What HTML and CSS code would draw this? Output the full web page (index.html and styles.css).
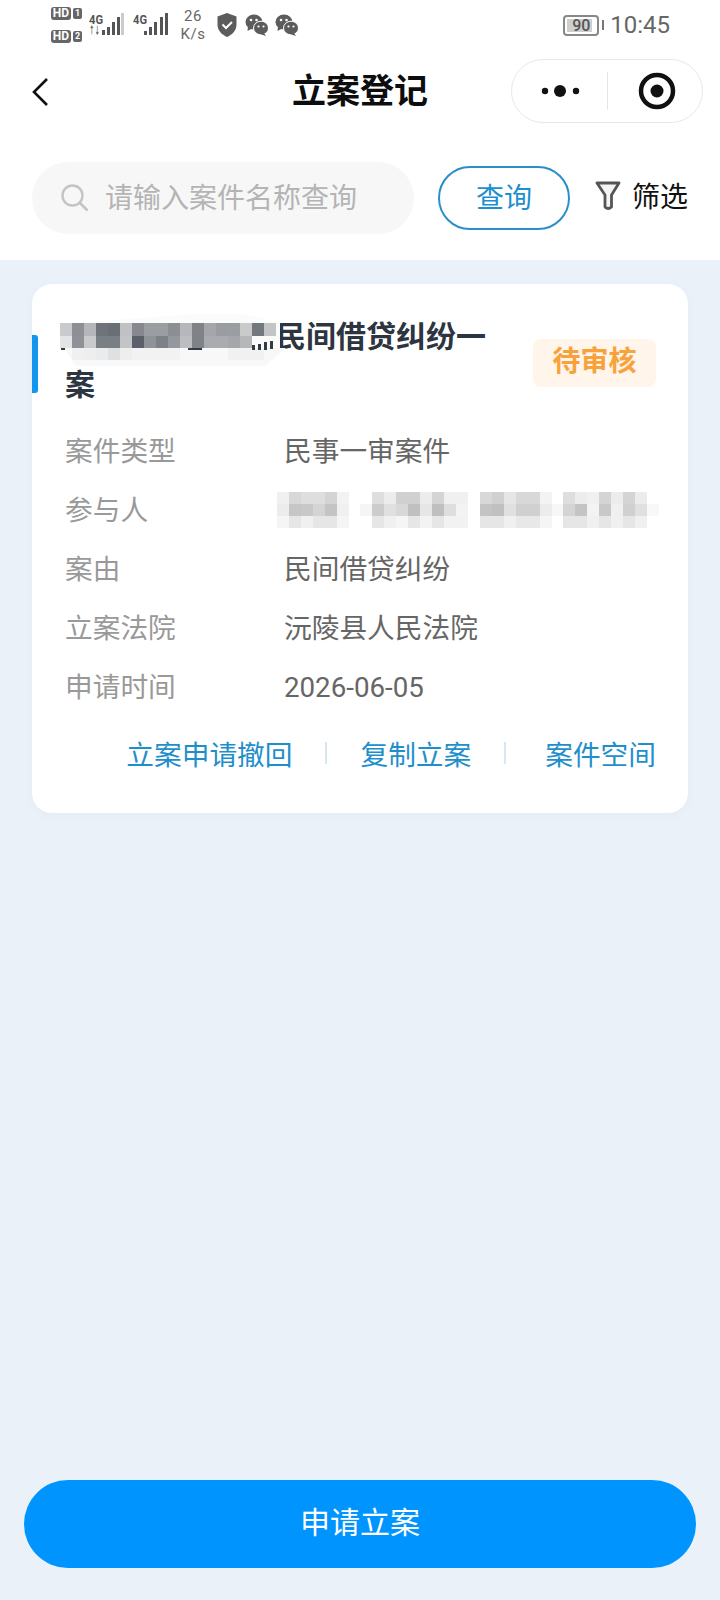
FILE: index.html
```html
<!DOCTYPE html>
<html lang="zh-CN">

<head>
    <meta charset="UTF-8">
    <meta name="viewport" content="width=device-width, initial-scale=1.0">
    <title>立案登记</title>
    <link rel="stylesheet" href="styles.css">
</head>

<body>
    <header class="top">
        <!-- phone status bar -->
        <div class="status">
            <div class="hd-col">
                <div class="hd-line"><span class="hd">HD</span><span class="sim">1</span></div>
                <div class="hd-line"><span class="hd">HD</span><span class="sim">2</span></div>
            </div>
            <svg class="signal" width="81" height="50" viewBox="0 0 81 50">
                <text x="0" y="24" class="net" textLength="14" lengthAdjust="spacingAndGlyphs">4G</text>
                <text x="0" y="34" class="arrows" textLength="11" lengthAdjust="spacingAndGlyphs">↑↓</text>
                <g fill="#555">
                    <rect x="13" y="30" width="3" height="5" />
                    <rect x="18" y="27" width="3" height="8" />
                    <rect x="23" y="22" width="3" height="13" />
                    <rect x="28" y="17" width="3" height="18" />
                </g>
                <rect x="32" y="13" width="3" height="22" fill="#ccc" />
                <text x="44" y="24" class="net" textLength="14" lengthAdjust="spacingAndGlyphs">4G</text>
                <g fill="#555">
                    <rect x="55" y="31" width="3" height="4" />
                    <rect x="60" y="27" width="3" height="8" />
                    <rect x="65" y="22" width="3" height="13" />
                    <rect x="71" y="17" width="3" height="18" />
                    <rect x="76" y="13" width="3" height="22" />
                </g>
            </svg>
            <div class="speed"><span>26</span><span>K/s</span></div>
            <svg class="shield" width="22" height="26" viewBox="0 0 22 26">
                <path d="M11 1 L20.5 4.5 V12.5 C20.5 19 15.5 23 11 25 C6.5 23 1.5 19 1.5 12.5 V4.5 Z" fill="#5c5c5c" />
                <path d="M6.5 12.5 L10 16 L16 10" fill="none" stroke="#fff" stroke-width="2" />
            </svg>
            <svg class="wechat" width="24" height="22" viewBox="0 0 24 22">
                <ellipse cx="9" cy="8" rx="8.5" ry="7.5" fill="#5c5c5c" />
                <path d="M3 12 L2.5 17 L8 14 Z" fill="#5c5c5c" />
                <circle cx="6" cy="6" r="1.3" fill="#fff" />
                <circle cx="11.5" cy="6" r="1.3" fill="#fff" />
                <ellipse cx="16" cy="14" rx="7.5" ry="6.8" fill="#5c5c5c" stroke="#fff" stroke-width="1" />
                <path d="M19 19 L21 22 L15 20 Z" fill="#5c5c5c" />
                <circle cx="13.5" cy="12.5" r="1.1" fill="#fff" />
                <circle cx="18.5" cy="12.5" r="1.1" fill="#fff" />
            </svg>
            <svg class="wechat" width="24" height="22" viewBox="0 0 24 22">
                <ellipse cx="9" cy="8" rx="8.5" ry="7.5" fill="#5c5c5c" />
                <path d="M3 12 L2.5 17 L8 14 Z" fill="#5c5c5c" />
                <circle cx="6" cy="6" r="1.3" fill="#fff" />
                <circle cx="11.5" cy="6" r="1.3" fill="#fff" />
                <ellipse cx="16" cy="14" rx="7.5" ry="6.8" fill="#5c5c5c" stroke="#fff" stroke-width="1" />
                <path d="M19 19 L21 22 L15 20 Z" fill="#5c5c5c" />
                <circle cx="13.5" cy="12.5" r="1.1" fill="#fff" />
                <circle cx="18.5" cy="12.5" r="1.1" fill="#fff" />
            </svg>
            <div class="status-right">
                <div class="battery"><span class="battery-level"></span><span class="battery-num">90</span></div>
                <span class="battery-nub"></span>
                <span class="clock">10:45</span>
            </div>
        </div>

        <nav class="nav">
            <div class="nav-left">
                <svg width="20" height="32" viewBox="0 0 20 32">
                    <path d="M17 3 L4 16 L17 29" fill="none" stroke="#111" stroke-width="2.6" />
                </svg>
            </div>
            <h1 class="nav-title">立案登记</h1>
            <div class="nav-right">
                <div class="capsule">
                    <svg class="capsule-more" width="95" height="64" viewBox="0 0 95 64">
                        <circle cx="33" cy="32" r="3.2" fill="#111" />
                        <circle cx="48" cy="32" r="6" fill="#111" />
                        <circle cx="64" cy="32" r="3.2" fill="#111" />
                    </svg>
                    <span class="capsule-line"></span>
                    <svg class="capsule-close" width="94" height="64" viewBox="0 0 94 64">
                        <circle cx="49" cy="32" r="16" fill="none" stroke="#111" stroke-width="4.5" />
                        <circle cx="49" cy="32" r="6.5" fill="#111" />
                    </svg>
                </div>
            </div>
        </nav>

        <div class="search-row">
            <div class="search-box">
                <svg width="30" height="30" viewBox="0 0 30 30">
                    <circle cx="12.5" cy="12.5" r="10" fill="none" stroke="#c4c4c4" stroke-width="2.4" />
                    <path d="M20 20 L27.5 27.5" stroke="#c4c4c4" stroke-width="2.6" />
                </svg>
                <span class="placeholder">请输入案件名称查询</span>
            </div>
            <button class="search-btn">查询</button>
            <div class="filter">
                <svg width="26" height="30" viewBox="0 0 26 30">
                    <path d="M2 2 H24 L16.5 14 V26 Q13 29 10 26 V14 Z" fill="#f4f4f4" stroke="#555" stroke-width="2.8" stroke-linejoin="round" />
                </svg>
                <span class="filter-text">筛选</span>
            </div>
        </div>
    </header>

    <main class="content">
        <section class="card">
            <span class="card-mark"></span>
            <div class="card-head">
                <div class="card-title"><span class="title-gap"></span>民间借贷纠纷一案</div>
                <span class="tag">待审核</span>
            </div>
            <div class="info-row"><span class="info-label">案件类型</span><span class="info-value">民事一审案件</span></div>
            <div class="info-row"><span class="info-label">参与人</span><span class="info-value"></span></div>
            <div class="info-row"><span class="info-label">案由</span><span class="info-value">民间借贷纠纷</span></div>
            <div class="info-row"><span class="info-label">立案法院</span><span class="info-value">沅陵县人民法院</span></div>
            <div class="info-row"><span class="info-label">申请时间</span><span class="info-value">2026-06-05</span></div>
            <div class="actions">
                <a class="action">立案申请撤回</a>
                <span class="action-line"></span>
                <a class="action">复制立案</a>
                <span class="action-line"></span>
                <a class="action action-last">案件空间</a>
            </div>

            <!-- pixelated cover over the case name -->
            <svg class="cover-title" width="236" height="70" viewBox="0 0 236 70">
                <path d="M135 0 H182 L220 9 V34 H12 V9 Z" fill="#fbfbfb" />
                <path d="M4 34 H226 L205 52 H16 Z" fill="#f8f8f8" />
                <g transform="translate(0 9)">
                    <rect x="0" width="12" height="13" fill="#c9cacd" />
                    <rect x="12" width="12" height="13" fill="#8c8f94" />
                    <rect x="24" width="12" height="13" fill="#b4b6ba" />
                    <rect x="36" width="12" height="13" fill="#6f747a" />
                    <rect x="48" width="12" height="13" fill="#6a6f76" />
                    <rect x="60" width="12" height="13" fill="#bfc1c4" />
                    <rect x="72" width="12" height="13" fill="#85888e" />
                    <rect x="84" width="12" height="13" fill="#9a9da2" />
                    <rect x="96" width="12" height="13" fill="#9a9da2" />
                    <rect x="108" width="12" height="13" fill="#8b8e93" />
                    <rect x="120" width="12" height="13" fill="#b5b7ba" />
                    <rect x="132" width="12" height="13" fill="#7f8388" />
                    <rect x="144" width="12" height="13" fill="#a4a6aa" />
                    <rect x="156" width="12" height="13" fill="#999ca0" />
                    <rect x="168" width="12" height="13" fill="#9a9da2" />
                    <rect x="180" width="12" height="13" fill="#c8cacc" />
                    <rect x="192" width="12" height="13" fill="#73777e" />
                    <rect x="204" width="12" height="13" fill="#c2c4c6" />
                </g>
                <g transform="translate(0 22)">
                    <rect x="0" width="12" height="12" fill="#e3e4e5" />
                    <rect x="12" width="12" height="12" fill="#8e9196" />
                    <rect x="24" width="12" height="12" fill="#c8cacc" />
                    <rect x="36" width="12" height="12" fill="#7a7f85" />
                    <rect x="48" width="12" height="12" fill="#7a7f85" />
                    <rect x="60" width="12" height="12" fill="#c2c4c6" />
                    <rect x="72" width="12" height="12" fill="#5b5f69" />
                    <rect x="84" width="12" height="12" fill="#8f9296" />
                    <rect x="96" width="12" height="12" fill="#7d8086" />
                    <rect x="108" width="12" height="12" fill="#94979b" />
                    <rect x="120" width="12" height="12" fill="#bbbdc0" />
                    <rect x="132" width="12" height="12" fill="#7f8388" />
                    <rect x="144" width="12" height="12" fill="#a9abaf" />
                    <rect x="156" width="12" height="12" fill="#a9abaf" />
                    <rect x="168" width="12" height="12" fill="#a4a6aa" />
                    <rect x="180" width="12" height="12" fill="#b5b7ba" />
                </g>
                <g transform="translate(0 34)">
                    <rect x="12" width="12" height="12" fill="#f0f0f1" />
                    <rect x="24" width="12" height="12" fill="#eeeeef" />
                    <rect x="36" width="12" height="12" fill="#eaebec" />
                    <rect x="48" width="12" height="12" fill="#dfe0e1" />
                    <rect x="60" width="12" height="12" fill="#eeeeef" />
                    <rect x="72" width="48" height="12" fill="#f2f2f3" />
                    <rect x="168" width="36" height="12" fill="#f1f1f2" />
                </g>
                <!-- bits of the name that stick out below the cover -->
                <g fill="#333b45">
                    <rect x="192" y="31" width="3" height="5" />
                    <rect x="198" y="30" width="3" height="6" />
                    <rect x="204" y="28" width="3" height="8" />
                    <rect x="210" y="27" width="3" height="8" />
                    <rect x="128" y="34" width="14" height="2" />
                    <rect x="1" y="34" width="4" height="2" />
                </g>
            </svg>

            <!-- pixelated cover over the participants -->
            <svg class="cover-people" width="400" height="44" viewBox="0 0 400 44">
                <g transform="translate(0 6)">
                    <rect x="7" width="12" height="12" fill="#f0f0f0" />
                    <rect x="19" width="12" height="12" fill="#d8d8d8" />
                    <rect x="31" width="24" height="12" fill="#dedede" />
                    <rect x="55" width="12" height="12" fill="#d4d4d4" />
                    <rect x="67" width="12" height="12" fill="#f3f3f3" />
                    <rect x="102" width="12" height="12" fill="#dedede" />
                    <rect x="114" width="12" height="12" fill="#ececec" />
                    <rect x="126" width="24" height="12" fill="#d0d0d0" />
                    <rect x="150" width="12" height="12" fill="#ececec" />
                    <rect x="162" width="12" height="12" fill="#d4d4d4" />
                    <rect x="174" width="24" height="12" fill="#f0f0f0" />
                    <rect x="210" width="12" height="12" fill="#d8d8d8" />
                    <rect x="222" width="12" height="12" fill="#d0d0d0" />
                    <rect x="234" width="12" height="12" fill="#e6e6e6" />
                    <rect x="246" width="24" height="12" fill="#d8d8d8" />
                    <rect x="270" width="12" height="12" fill="#f3f3f3" />
                    <rect x="293" width="12" height="12" fill="#dedede" />
                    <rect x="305" width="12" height="12" fill="#ececec" />
                    <rect x="317" width="12" height="12" fill="#f0f0f0" />
                    <rect x="329" width="12" height="12" fill="#d4d4d4" />
                    <rect x="341" width="12" height="12" fill="#ececec" />
                    <rect x="353" width="12" height="12" fill="#d4d4d4" />
                    <rect x="365" width="12" height="12" fill="#ececec" />
                </g>
                <g transform="translate(0 18)">
                    <rect x="7" width="12" height="12" fill="#ececec" />
                    <rect x="19" width="12" height="12" fill="#c6c6c6" />
                    <rect x="31" width="12" height="12" fill="#c8c8c8" />
                    <rect x="43" width="12" height="12" fill="#d4d4d4" />
                    <rect x="55" width="12" height="12" fill="#c4c4c4" />
                    <rect x="67" width="12" height="12" fill="#f0f0f0" />
                    <rect x="90" width="12" height="12" fill="#f5f5f5" />
                    <rect x="102" width="12" height="12" fill="#cccccc" />
                    <rect x="114" width="12" height="12" fill="#e0e0e0" />
                    <rect x="126" width="12" height="12" fill="#d8d8d8" />
                    <rect x="138" width="12" height="12" fill="#c0c0c0" />
                    <rect x="150" width="12" height="12" fill="#e6e6e6" />
                    <rect x="162" width="12" height="12" fill="#bfbfbf" />
                    <rect x="174" width="12" height="12" fill="#dedede" />
                    <rect x="186" width="12" height="12" fill="#f3f3f3" />
                    <rect x="210" width="12" height="12" fill="#c4c4c4" />
                    <rect x="222" width="12" height="12" fill="#c0c0c0" />
                    <rect x="234" width="12" height="12" fill="#e0e0e0" />
                    <rect x="246" width="24" height="12" fill="#d0d0d0" />
                    <rect x="270" width="12" height="12" fill="#ececec" />
                    <rect x="282" width="12" height="12" fill="#f7f7f7" />
                    <rect x="293" width="12" height="12" fill="#d4d4d4" />
                    <rect x="305" width="12" height="12" fill="#c4c4c4" />
                    <rect x="317" width="12" height="12" fill="#f3f3f3" />
                    <rect x="329" width="12" height="12" fill="#c8c8c8" />
                    <rect x="341" width="12" height="12" fill="#f0f0f0" />
                    <rect x="353" width="12" height="12" fill="#d0d0d0" />
                    <rect x="365" width="12" height="12" fill="#e0e0e0" />
                    <rect x="377" width="12" height="12" fill="#f8f8f8" />
                </g>
                <g transform="translate(0 30)">
                    <rect x="7" width="12" height="12" fill="#f5f5f5" />
                    <rect x="19" width="12" height="12" fill="#e6e6e6" />
                    <rect x="31" width="12" height="12" fill="#f0f0f0" />
                    <rect x="43" width="24" height="12" fill="#e6e6e6" />
                    <rect x="67" width="12" height="12" fill="#f5f5f5" />
                    <rect x="102" width="12" height="12" fill="#e6e6e6" />
                    <rect x="114" width="12" height="12" fill="#f0f0f0" />
                    <rect x="126" width="12" height="12" fill="#f5f5f5" />
                    <rect x="138" width="12" height="12" fill="#e6e6e6" />
                    <rect x="150" width="12" height="12" fill="#f3f3f3" />
                    <rect x="162" width="12" height="12" fill="#e6e6e6" />
                    <rect x="174" width="24" height="12" fill="#f2f2f2" />
                    <rect x="210" width="24" height="12" fill="#e6e6e6" />
                    <rect x="234" width="12" height="12" fill="#f0f0f0" />
                    <rect x="246" width="24" height="12" fill="#e8e8e8" />
                    <rect x="270" width="12" height="12" fill="#f5f5f5" />
                    <rect x="293" width="24" height="12" fill="#e6e6e6" />
                    <rect x="317" width="12" height="12" fill="#f0f0f0" />
                    <rect x="329" width="12" height="12" fill="#e6e6e6" />
                    <rect x="341" width="12" height="12" fill="#f0f0f0" />
                    <rect x="353" width="12" height="12" fill="#e6e6e6" />
                    <rect x="365" width="12" height="12" fill="#f0f0f0" />
                </g>
            </svg>
        </section>

        <button class="apply-btn">申请立案</button>
    </main>
</body>

</html>
```
FILE: styles.css
```css
* {
    box-sizing: border-box;
}

body {
    font-family: Roboto, 'Noto Sans CJK SC', sans-serif;
    margin: 0;
    padding: 0;
    width: 720px;
    height: 1600px;
    display: flex;
    flex-direction: column;
    background-color: #ebf1f8;
}

.top {
    background-color: #fff;
    height: 260px;
}

/* status bar */
.status {
    height: 50px;
    display: flex;
    align-items: center;
    padding: 0 50px 0 51px;
    color: #666;
}

.hd-col {
    width: 31px;
    height: 36px;
    margin: 0 7px 0 0;
    display: flex;
    flex-direction: column;
    justify-content: space-between;
}

.hd-line {
    display: flex;
    justify-content: space-between;
}

.hd {
    width: 20px;
    height: 13px;
    border-radius: 3px;
    background-color: #666;
    color: #fff;
    font-size: 12px;
    font-weight: 700;
    line-height: 13px;
    text-align: center;
}

.sim {
    width: 9px;
    height: 11px;
    margin-top: 1px;
    border-radius: 2px;
    background-color: #666;
    color: #fff;
    font-size: 9px;
    font-weight: 700;
    line-height: 11px;
    text-align: center;
}

.signal {
    flex: none;
}

.net {
    font-size: 12px;
    font-weight: 700;
    fill: #555;
}

.arrows {
    font-size: 10px;
    font-weight: 700;
    fill: #555;
}

.speed {
    width: 24px;
    margin: 0 11px;
    display: flex;
    flex-direction: column;
    align-items: center;
    font-size: 15px;
    line-height: 18px;
    letter-spacing: 0.5px;
}

.shield {
    margin-right: 7px;
}

.wechat {
    margin-right: 6px;
}

.status-right {
    margin-left: auto;
    display: flex;
    align-items: center;
    font-size: 24px;
}

.battery {
    position: relative;
    width: 36px;
    height: 21px;
    border: 2px solid #888;
    border-radius: 4px;
    padding: 2px;
}

.battery-level {
    display: block;
    width: 90%;
    height: 100%;
    background-color: #cfcfcf;
}

.battery-num {
    position: absolute;
    inset: 0;
    color: #555;
    font-size: 16px;
    font-weight: 500;
    line-height: 17px;
    text-align: center;
}

.battery-nub {
    width: 2px;
    height: 10px;
    margin: 0 6px 0 3px;
    background-color: #777;
}

/* title bar */
.nav {
    height: 82px;
    display: grid;
    grid-template-columns: 1fr auto 1fr;
    align-items: center;
}

.nav-left {
    padding: 2px 0 0 30px;
    display: flex;
}

.nav-title {
    margin: 0;
    padding-bottom: 6px;
    font-size: 34px;
    font-weight: 700;
    color: #0d0d0d;
}

.nav-right {
    display: flex;
    justify-content: flex-end;
    padding-right: 17px;
}

.capsule {
    width: 192px;
    height: 64px;
    border: 1px solid #e8e8e8;
    border-radius: 32px;
    display: flex;
    align-items: center;
    flex: none;
}

.capsule-line {
    flex: none;
    width: 1px;
    height: 38px;
    background-color: #e6e6e6;
}

.capsule svg {
    flex: none;
}

/* search */
.search-row {
    padding: 30px 32px 26px;
    display: flex;
    align-items: center;
}

.search-box {
    width: 382px;
    height: 72px;
    border-radius: 36px;
    background-color: #f7f7f7;
    display: flex;
    align-items: center;
    padding-left: 28px;
}

.placeholder {
    margin-left: 15px;
    padding-bottom: 5px;
    font-size: 28px;
    color: #b4b4b4;
}

.search-btn {
    width: 132px;
    height: 64px;
    margin-left: 24px;
    border: 2px solid #2a8fc7;
    border-radius: 32px;
    background-color: #fff;
    color: #1c90cc;
    font-family: inherit;
    font-size: 28px;
    padding: 0 0 5px;
}

.filter {
    margin-left: auto;
    display: flex;
    align-items: center;
    gap: 11px;
    font-size: 28px;
    color: #111;
}

.filter svg {
    margin-bottom: 4px;
}

.filter-text {
    padding-bottom: 7px;
}

/* case card */
.content {
    flex: 1;
    padding: 24px 32px 32px;
    display: flex;
    flex-direction: column;
}

.card {
    position: relative;
    height: 529px;
    padding: 29px 32px 0 33px;
    border-radius: 20px;
    background-color: #fff;
    box-shadow: 0 2px 8px rgba(120, 140, 170, 0.06);
}

.card-mark {
    position: absolute;
    left: 0;
    top: 51px;
    width: 6px;
    height: 58px;
    border-radius: 0 3px 3px 0;
    background-color: #1296f0;
}

.card-head {
    display: flex;
    justify-content: space-between;
    align-items: flex-start;
    margin-bottom: 13px;
}

.card-title {
    width: 432px;
    font-size: 30px;
    font-weight: 700;
    line-height: 48px;
    color: #2c3540;
}

.title-gap {
    display: inline-block;
    width: 211px;
}

.tag {
    margin-top: 26px;
    width: 123px;
    height: 48px;
    border-radius: 8px;
    background-color: #fff5ea;
    color: #f8a23c;
    font-size: 28px;
    font-weight: 700;
    line-height: 46px;
    text-align: center;
}

.info-row {
    display: flex;
    height: 59px;
    align-items: baseline;
    font-size: 27.7px;
    line-height: 59px;
}

.info-label {
    width: 219px;
    color: #999;
}

.info-value {
    color: #666;
}

.actions {
    margin-top: 16px;
    display: flex;
    justify-content: flex-end;
    align-items: center;
    height: 40px;
    color: #1f8fcb;
    font-size: 27.7px;
}

.action-line {
    width: 2px;
    height: 22px;
    margin: 0 33px;
    background-color: #d5e8f2;
}

.action-last {
    margin-left: 6px;
}

.cover-title {
    position: absolute;
    left: 28px;
    top: 30px;
}

.cover-people {
    position: absolute;
    left: 238px;
    top: 202px;
}

/* bottom button */
.apply-btn {
    margin: auto -8px 0;
    height: 88px;
    border: none;
    border-radius: 44px;
    background-color: #0094ff;
    color: #fff;
    font-family: inherit;
    font-size: 30px;
    padding: 0 0 8px;
}
```
